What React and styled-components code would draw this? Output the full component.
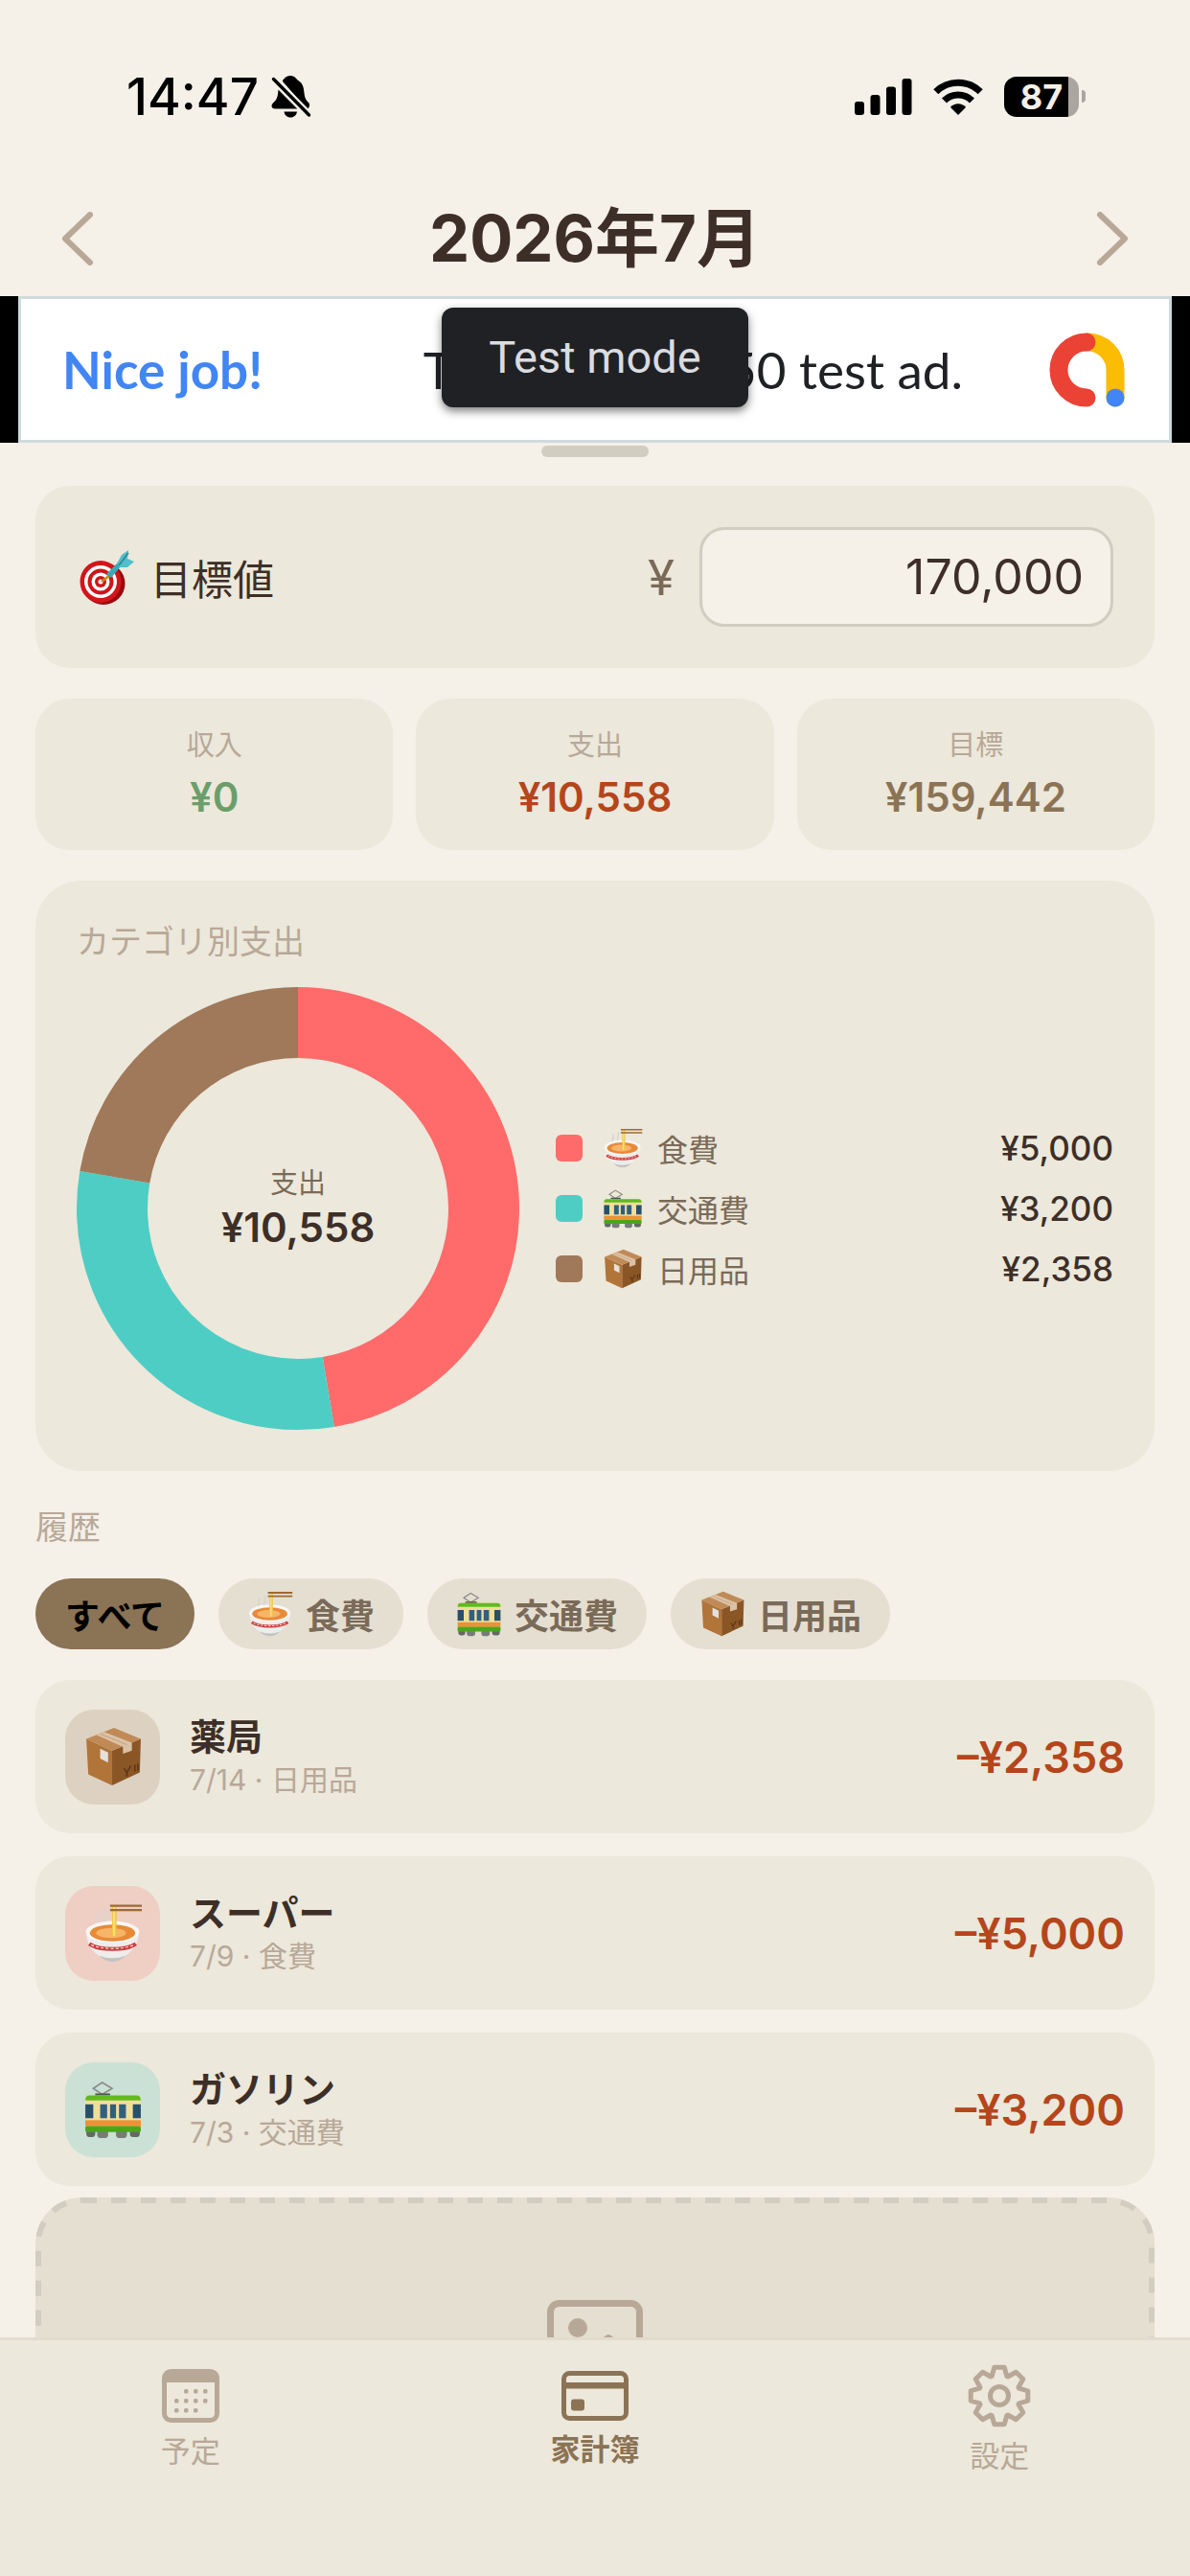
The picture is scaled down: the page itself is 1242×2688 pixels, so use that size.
import { useState } from "react";
import styled, { createGlobalStyle } from "styled-components";

const categories = {
  food: { name: "食費", color: "#ff6b6b", tint: "#efcec4", Icon: RamenIcon },
  transport: { name: "交通費", color: "#4ecdc4", tint: "#cbe1d5", Icon: TramIcon },
  daily: { name: "日用品", color: "#a0785a", tint: "#ddd1c1", Icon: BoxIcon },
};

const totals = [
  { category: "food", amount: 5000 },
  { category: "transport", amount: 3200 },
  { category: "daily", amount: 2358 },
];

const history = [
  { title: "薬局", date: "7/14", category: "daily", amount: 2358 },
  { title: "スーパー", date: "7/9", category: "food", amount: 5000 },
  { title: "ガソリン", date: "7/3", category: "transport", amount: 3200 },
];

const yen = (value) => "¥" + value.toLocaleString("en-US");

export default function App() {
  const [goal, setGoal] = useState("170,000");
  const [filter, setFilter] = useState("all");
  const spent = totals.reduce((sum, item) => sum + item.amount, 0);
  const rows = history.filter((item) => filter === "all" || item.category === filter);

  return (
    <>
      <GlobalStyle />
      <Screen>
        <StatusBar>
          <StatusGroup>
            <Clock>14:47</Clock>
            <BellOffIcon />
          </StatusGroup>
          <StatusGroup>
            <SignalIcon />
            <WifiIcon />
            <Battery>
              <BatteryBody>87</BatteryBody>
              <BatteryCap />
            </Battery>
          </StatusGroup>
        </StatusBar>

        <Header>
          <MonthButton aria-label="前の月">
            <svg width="34" height="56" viewBox="0 0 34 56">
              <path d="M30 3L4 28L30 53" />
            </svg>
          </MonthButton>
          <Month>2026年7月</Month>
          <MonthButton aria-label="次の月">
            <svg width="34" height="56" viewBox="0 0 34 56">
              <path d="M4 3L30 28L4 53" />
            </svg>
          </MonthButton>
        </Header>

        <AdBanner>
          <AdBody>
            <AdPraise>Nice job!</AdPraise>
            <AdText>This is a 320x50 test ad.</AdText>
            <AdLogo />
          </AdBody>
          <TestMode>Test mode</TestMode>
        </AdBanner>
        <Handle />

        <Main>
          <GoalCard>
            <GoalLabel htmlFor="goal">
              <DartIcon size={60} />
              目標値
            </GoalLabel>
            <Currency>¥</Currency>
            <GoalInput id="goal" value={goal} onChange={(e) => setGoal(e.target.value)} />
          </GoalCard>

          <Stats>
            <Stat>
              <StatLabel>収入</StatLabel>
              <StatValue color="#6b9e6b">¥0</StatValue>
            </Stat>
            <Stat>
              <StatLabel>支出</StatLabel>
              <StatValue color="#b5451b">{yen(spent)}</StatValue>
            </Stat>
            <Stat>
              <StatLabel>目標</StatLabel>
              <StatValue color="#8b7355">{yen(159442)}</StatValue>
            </Stat>
          </Stats>

          <ChartCard>
            <SectionTitle>カテゴリ別支出</SectionTitle>
            <ChartRow>
              <ChartBox>
                <Donut total={spent} />
                <ChartCenter>
                  <ChartLabel>支出</ChartLabel>
                  <StatValue color="#3d2f28">{yen(spent)}</StatValue>
                </ChartCenter>
              </ChartBox>
              <Legend>
                {totals.map((item) => {
                  const { name, color, Icon } = categories[item.category];
                  return (
                    <LegendRow key={item.category}>
                      <Swatch color={color} />
                      <Icon size={42} />
                      <LegendName>{name}</LegendName>
                      <LegendValue>{yen(item.amount)}</LegendValue>
                    </LegendRow>
                  );
                })}
              </Legend>
            </ChartRow>
          </ChartCard>

          <History>
            <SectionTitle>履歴</SectionTitle>
            <Chips>
              <Chip $active={filter === "all"} onClick={() => setFilter("all")}>
                すべて
              </Chip>
              {Object.entries(categories).map(([key, { name, Icon }]) => (
                <Chip key={key} $active={filter === key} onClick={() => setFilter(key)}>
                  <Icon size={48} />
                  {name}
                </Chip>
              ))}
            </Chips>
            <List>
              {rows.map((item) => {
                const { name, tint, Icon } = categories[item.category];
                return (
                  <Entry key={item.title}>
                    <EntryIcon color={tint}>
                      <Icon size={62} />
                    </EntryIcon>
                    <EntryText>
                      <EntryTitle>{item.title}</EntryTitle>
                      <EntryMeta>
                        {item.date} · {name}
                      </EntryMeta>
                    </EntryText>
                    <EntryAmount>–{yen(item.amount)}</EntryAmount>
                  </Entry>
                );
              })}
            </List>
          </History>

          <Upload aria-label="画像を追加">
            <DashedOutline>
              <rect x="3" y="3" rx="45" />
            </DashedOutline>
            <PhotoIcon />
          </Upload>
        </Main>

        <TabBar>
          <Tab href="#schedule">
            <CalendarIcon />
            予定
          </Tab>
          <Tab href="#budget" $active>
            <CardIcon />
            家計簿
          </Tab>
          <Tab href="#settings">
            <GearIcon />
            設定
          </Tab>
        </TabBar>
      </Screen>
    </>
  );
}

function Donut({ total }) {
  const radius = 194;
  const length = 2 * Math.PI * radius;
  let start = 0;
  return (
    <svg width="462" height="462" viewBox="0 0 462 462">
      <g transform="rotate(-90 231 231)" fill="none" strokeWidth="74">
        {totals.map((item) => {
          const part = (item.amount / total) * length;
          const offset = -start;
          start += part;
          return (
            <circle
              key={item.category}
              cx="231"
              cy="231"
              r={radius}
              stroke={categories[item.category].color}
              strokeDasharray={`${part} ${length - part}`}
              strokeDashoffset={offset}
            />
          );
        })}
      </g>
    </svg>
  );
}

function BellOffIcon() {
  return (
    <svg width="44" height="46" viewBox="0 0 44 46">
      <path d="M13 5.500C15 5 15.500 1 21 1C26.500 1 27 5 30 6.500C34.500 9.500 35 14 35.500 19C36 25 38 27 40 29C42 31 41 35.500 38 35.500L13 7Z" />
      <path d="M8.500 15.500C8 20 8 24 5 27.500C3 29.500 1.500 30.500 1.500 32.500C1.500 34.500 3 35.500 5 35.500H28.500Z" />
      <path d="M14.500 38.500H28C27.500 42 25 44.500 21.300 44.500C17.500 44.500 15 42 14.500 38.500Z" />
      <path d="M3.500 4.500L40.500 42" stroke="#f5f0e8" strokeWidth="8" />
      <path d="M3.500 4.500L40.500 42" stroke="#000" strokeWidth="3.400" strokeLinecap="round" />
    </svg>
  );
}

function SignalIcon() {
  return (
    <svg width="60" height="40" viewBox="0 0 60 40">
      <rect x="0" y="25" width="10" height="14" rx="3" />
      <rect x="16.500" y="18" width="10" height="21" rx="3" />
      <rect x="33" y="9.500" width="10" height="29.500" rx="3" />
      <rect x="49.500" y="1" width="10" height="38" rx="3" />
    </svg>
  );
}

function WifiIcon() {
  return (
    <svg width="52" height="40" viewBox="0 0 52 40">
      <g fill="none" stroke="#000" strokeWidth="7.200">
        <path d="M2.800 14.800A33 33 0 0 1 49.200 14.800" />
        <path d="M11.500 24A20.500 20.500 0 0 1 40.500 24" />
      </g>
      <path d="M18 31C22 26 30 26 34 31L26 39Z" />
    </svg>
  );
}

function AdLogo() {
  return (
    <svg width="80" height="80" viewBox="0 0 80 80">
      <g fill="none" strokeWidth="19" strokeLinecap="round">
        <path d="M40 11A29 29 0 0 1 69 40V69" stroke="#fbbc04" />
        <path d="M39 11A29 29 0 0 0 39 69" stroke="#ea4335" />
      </g>
      <circle cx="69" cy="69" r="9.500" fill="#4285f4" />
    </svg>
  );
}

function DartIcon({ size }) {
  return (
    <svg width={size} height={size} viewBox="0 0 60 60">
      <ellipse cx="28" cy="37" rx="22.500" ry="22" fill="#98090f" />
      <ellipse cx="25" cy="35" rx="21.500" ry="22" fill="#d3151b" />
      <circle cx="25" cy="35" r="17" fill="#fff" />
      <circle cx="25" cy="35" r="13.500" fill="#cf141a" />
      <circle cx="25" cy="35" r="9.500" fill="#fff" />
      <circle cx="25" cy="35" r="6" fill="#cf141a" />
      <circle cx="25" cy="35" r="2.500" fill="#fff" />
      <path d="M26 35L35 28" stroke="#c98a1a" strokeWidth="2.500" />
      <path d="M31 27L43 15L46 19L36 31Z" fill="#38a9b8" />
      <path d="M42 16L47 7L54 2L53 11L60 14L53 20L45 20Z" fill="#51bfcb" />
      <path d="M44 18L54 5" stroke="#2a8494" strokeWidth="1.500" />
    </svg>
  );
}

function RamenIcon({ size }) {
  return (
    <svg width={size} height={size} viewBox="0 0 60 60">
      <path d="M16 24C12 18 18 15 15 9M23 23C20 16 25 13 23 6" fill="none" stroke="#d9d6d0" strokeWidth="2.500" />
      <path d="M3 29C3 41 9 49 17 54Q29 61 41 54C49 49 56 41 56 29Z" fill="#eeedeb" />
      <path d="M16 53Q29 58 43 53Q37 59 29.500 59Q22 59 16 53Z" fill="#c4c3c2" />
      <ellipse cx="29.500" cy="29" rx="27" ry="11" fill="#f8f7f5" />
      <ellipse cx="29.500" cy="30" rx="23" ry="8.500" fill="#e88a38" />
      <ellipse cx="28" cy="30" rx="15" ry="5" fill="#f6b569" />
      <path d="M6 41C16 48 43 48 53 41" fill="none" stroke="#cf3a3c" strokeWidth="4" />
      <path d="M8 42C17 47 42 47 51 42" fill="none" stroke="#f3dcd8" strokeWidth="1.200" strokeDasharray="3 2" />
      <path d="M29 33V3H33.500V33Z" fill="#f2c744" />
      <path d="M31 33V3" stroke="#fae392" strokeWidth="1.500" />
      <path d="M27 2.500H59M27 7H59" stroke="#9b6a35" strokeWidth="2.200" />
    </svg>
  );
}

function TramIcon({ size }) {
  return (
    <svg width={size} height={size} viewBox="0 0 60 60">
      <path d="M10 9L19 3L29 9L19 15Z" fill="none" stroke="#8b8b8b" strokeWidth="1.600" />
      <rect x="12" y="14" width="15" height="3" fill="#4f5553" />
      <rect x="3" y="49" width="9" height="9" rx="3" fill="#646866" />
      <rect x="14" y="50" width="11" height="9" rx="3" fill="#777b79" />
      <rect x="33" y="50" width="11" height="9" rx="3" fill="#777b79" />
      <rect x="47" y="49" width="10" height="9" rx="3" fill="#646866" />
      <path d="M6 16H54Q58 16 58 21V52H2V21Q2 16 6 16Z" fill="#eedf9a" />
      <path d="M6 16H54Q58 16 58 21H2Q2 16 6 16Z" fill="#63ba1e" />
      <rect x="2" y="41" width="56" height="6" fill="#ed9137" />
      <rect x="2" y="47" width="56" height="6" rx="1.500" fill="#4ba51b" />
      <rect x="2" y="25" width="8" height="14" fill="#28506b" />
      <rect x="50" y="25" width="8" height="14" fill="#28506b" />
      <rect x="17" y="25" width="7" height="14" fill="#31607f" />
      <rect x="27" y="25" width="6" height="14" fill="#31607f" />
      <rect x="36" y="25" width="7" height="14" fill="#31607f" />
    </svg>
  );
}

function BoxIcon({ size }) {
  return (
    <svg width={size} height={size} viewBox="0 0 60 60">
      <path d="M3 12L29 24V59L5 48Z" fill="#b17439" />
      <path d="M29 24L58 12L57 46L29 59Z" fill="#8a5626" />
      <path d="M3 12L31 1L58 12L29 24Z" fill="#c08a57" />
      <path d="M13 8L21 5L49 16V24L40 27V20Z" fill="#dbc2a6" />
      <path d="M17 7L44 18" stroke="#c6a581" strokeWidth="1" />
      <path d="M17 22L25 26V36L17 32Z" fill="#e3e1dc" />
      <path d="M41 42L44 46L48 39M44 46V50M52 38V45M55 37V44" fill="none" stroke="#5b3616" strokeWidth="1.500" />
    </svg>
  );
}

function PhotoIcon() {
  return (
    <svg width="100" height="86" viewBox="0 0 100 86">
      <rect x="3.500" y="3.500" width="93" height="79" rx="9" fill="none" stroke="#b8a898" strokeWidth="7" />
      <circle cx="32" cy="29" r="10" fill="#b8a898" />
      <path d="M7 70L31 51L43 60L60 38Q64 34 68 38L93 62V78H7Z" fill="#b8a898" />
    </svg>
  );
}

function CalendarIcon() {
  const dots = [
    [25, 23], [35, 23], [45, 23],
    [15, 33], [25, 33], [35, 33], [45, 33],
    [15, 43], [25, 43], [35, 43],
  ];
  return (
    <svg width="60" height="56" viewBox="0 0 60 56" fill="currentColor">
      <rect x="2.500" y="2.500" width="55" height="51" rx="7" fill="none" stroke="currentColor" strokeWidth="5" />
      <path d="M2 14V8Q2 2 8 2H52Q58 2 58 8V14Z" />
      {dots.map(([x, y]) => (
        <rect key={`${x}-${y}`} x={x - 2} y={y - 2} width="4.500" height="4.500" rx="1.500" />
      ))}
    </svg>
  );
}

function CardIcon() {
  return (
    <svg width="70" height="52" viewBox="0 0 70 52" fill="currentColor">
      <rect x="2.500" y="2.500" width="65" height="47" rx="6" fill="none" stroke="currentColor" strokeWidth="5" />
      <rect x="3" y="12" width="64" height="6.500" />
      <rect x="10" y="29.500" width="14" height="12" rx="3" />
    </svg>
  );
}

function GearIcon() {
  const points = [];
  for (let i = 0; i < 8; i++) {
    const angle = (i * Math.PI) / 4;
    for (const [x, y] of [[-7.800, -20.500], [-5.200, -29.800], [5.200, -29.800], [7.800, -20.500]]) {
      const px = x * Math.cos(angle) - y * Math.sin(angle);
      const py = x * Math.sin(angle) + y * Math.cos(angle);
      points.push(`${33 + px},${33 + py}`);
    }
  }
  return (
    <svg width="66" height="66" viewBox="0 0 66 66" fill="none" stroke="currentColor" strokeWidth="5">
      <polygon points={points.join(" ")} strokeLinejoin="round" />
      <circle cx="33" cy="33" r="9.500" />
    </svg>
  );
}

const GlobalStyle = createGlobalStyle`
  * {
    box-sizing: border-box;
  }

  body {
    margin: 0;
    background: #f5f0e8;
    color: #3d2f28;
    font-family: Inter, "Noto Sans CJK JP", sans-serif;
  }

  button,
  input {
    font-family: inherit;
    border: none;
  }

  svg {
    display: block;
    flex-shrink: 0;
  }
`;

const Screen = styled.div`
  height: 100vh;
  display: flex;
  flex-direction: column;
`;

const StatusBar = styled.div`
  flex-shrink: 0;
  height: 189px;
  padding: 12px 109px 0 132px;
  display: flex;
  justify-content: space-between;
  align-items: center;
`;

const StatusGroup = styled.div`
  display: flex;
  align-items: center;
  gap: 22px;

  &:first-child {
    gap: 12px;
  }
`;

const Clock = styled.span`
  font-size: 53px;
  font-weight: 500;
  color: #000;
`;

const Battery = styled.div`
  display: flex;
  align-items: center;
  gap: 3px;
`;

const BatteryBody = styled.div`
  width: 78px;
  height: 42px;
  border-radius: 13px;
  background: linear-gradient(to right, #000 86%, #aaa69f 86%);
  color: #f5f0e8;
  font-size: 36px;
  font-weight: 700;
  line-height: 42px;
  text-align: center;
`;

const BatteryCap = styled.div`
  width: 4px;
  height: 13px;
  border-radius: 0 4px 4px 0;
  background: #aaa69f;
`;

const Header = styled.header`
  flex-shrink: 0;
  height: 120px;
  padding: 0 64px;
  display: flex;
  justify-content: space-between;
  align-items: center;
`;

const MonthButton = styled.button`
  padding: 0;
  background: none;

  path {
    fill: none;
    stroke: #b8a898;
    stroke-width: 6px;
    stroke-linecap: round;
    stroke-linejoin: round;
  }
`;

const Month = styled.h1`
  margin: 0;
  font-size: 67px;
  font-weight: 700;
  line-height: 80px;
`;

const AdBanner = styled.div`
  position: relative;
  flex-shrink: 0;
  height: 153px;
  padding: 0 19px;
  background: #000;
`;

const AdBody = styled.div`
  height: 100%;
  padding: 0 45px 0 43px;
  display: flex;
  align-items: center;
  background: #fff;
  border: 3px solid #cfdadd;
  color: #202124;
  font-family: Lato, sans-serif;
  font-size: 53px;
  white-space: nowrap;
`;

const AdPraise = styled.span`
  color: #4285f4;
  font-weight: 700;
`;

const AdText = styled.span`
  margin: 0 90px 0 auto;
`;

const TestMode = styled.div`
  position: absolute;
  top: 12px;
  left: 50%;
  transform: translateX(-50%);
  width: 320px;
  line-height: 104px;
  border-radius: 12px;
  background: #202124;
  box-shadow: 0 4px 10px rgba(0, 0, 0, 0.5);
  color: #dadce0;
  font-family: Roboto, sans-serif;
  font-size: 47px;
  text-align: center;
`;

const Handle = styled.div`
  flex-shrink: 0;
  align-self: center;
  width: 112px;
  height: 12px;
  margin: 3px 0 30px;
  border-radius: 6px;
  background: #d1cdc1;
`;

const Main = styled.main`
  flex: 1;
  min-height: 0;
  overflow: hidden;
  padding: 0 37px;
  display: flex;
  flex-direction: column;
  gap: 32px;

  > * {
    flex-shrink: 0;
  }
`;

const Card = styled.section`
  border-radius: 36px;
  background: #ece8db;
`;

const GoalCard = styled(Card)`
  padding: 43px;
  display: flex;
  align-items: center;
`;

const GoalLabel = styled.label`
  display: flex;
  align-items: center;
  gap: 17px;
  font-size: 43px;
`;

const Currency = styled.span`
  margin: 0 26px 0 auto;
  color: #7a6a58;
  font-size: 51px;
`;

const GoalInput = styled.input`
  width: 432px;
  height: 104px;
  padding: 0 28px;
  border: 3px solid #d1cdc1;
  border-radius: 26px;
  background: #f5f0e8;
  color: #3d2f28;
  font-size: 50px;
  text-align: right;
`;

const Stats = styled.div`
  display: grid;
  grid-template-columns: repeat(3, 1fr);
  gap: 24px;
`;

const Stat = styled(Card)`
  padding: 31px 12px;
  display: flex;
  flex-direction: column;
  align-items: center;
  gap: 12px;
`;

const StatLabel = styled.span`
  color: #b8a898;
  font-size: 29px;
  line-height: 36px;
`;

const StatValue = styled.strong`
  color: ${(props) => props.color};
  font-size: 42px;
  font-weight: 600;
  line-height: 48px;
`;

const ChartCard = styled(Card)`
  padding: 43px;
  border-radius: 48px;
`;

const SectionTitle = styled.h2`
  margin: 0;
  color: #b8a898;
  font-size: 34px;
  font-weight: 400;
  line-height: 42px;
`;

const ChartRow = styled.div`
  margin-top: 26px;
  display: flex;
  align-items: center;
  gap: 38px;
`;

const ChartBox = styled.div`
  position: relative;
`;

const ChartCenter = styled.div`
  position: absolute;
  inset: 0;
  display: flex;
  flex-direction: column;
  justify-content: center;
  align-items: center;
  gap: 4px;
`;

const ChartLabel = styled(StatLabel)`
  color: #7a6a58;
`;

const Legend = styled.div`
  flex: 1;
  display: flex;
  flex-direction: column;
  gap: 19px;
`;

const LegendRow = styled.div`
  height: 44px;
  display: flex;
  align-items: center;
  font-size: 32px;
`;

const Swatch = styled.span`
  width: 28px;
  height: 28px;
  margin-right: 21px;
  border-radius: 6px;
  background: ${(props) => props.color};
`;

const LegendName = styled.span`
  margin-left: 15px;
  color: #7a6a58;
`;

const LegendValue = styled.span`
  margin-left: auto;
  font-size: 35px;
  font-weight: 500;
`;

const History = styled.section`
  padding-top: 6px;
`;

const Chips = styled.div`
  margin: 32px 0;
  display: flex;
  gap: 25px;
`;

const Chip = styled.button`
  height: 74px;
  padding: 0 30px;
  display: flex;
  align-items: center;
  gap: 13px;
  border-radius: 37px;
  background: ${(props) => (props.$active ? "#8b7355" : "#e5dfd2")};
  color: ${(props) => (props.$active ? "#000" : "#7a6a58")};
  font-size: 36px;
  font-weight: 600;

  &:first-child {
    padding: 0 31px;
  }
`;

const List = styled.div`
  display: flex;
  flex-direction: column;
  gap: 24px;
`;

const Entry = styled(Card)`
  height: 160px;
  padding: 0 31px;
  display: flex;
  align-items: center;
  gap: 31px;
`;

const EntryIcon = styled.div`
  width: 99px;
  height: 99px;
  display: grid;
  place-items: center;
  border-radius: 30px;
  background: ${(props) => props.color};
`;

const EntryText = styled.div`
  flex: 1;
`;

const EntryTitle = styled.h3`
  margin: 0;
  font-size: 38px;
  font-weight: 600;
  line-height: 48px;
`;

const EntryMeta = styled.p`
  margin: 0;
  color: #b8a898;
  font-size: 30px;
  line-height: 42px;
`;

const EntryAmount = styled.strong`
  color: #b5451b;
  font-size: 45px;
  font-weight: 600;
`;

const Upload = styled.button`
  position: relative;
  height: 480px;
  margin-top: -20px;
  padding: 107px 0 0;
  display: flex;
  justify-content: center;
  align-items: flex-start;
  border-radius: 48px;
  background: #e5dfd2;
`;

const DashedOutline = styled.svg`
  position: absolute;
  inset: 0;
  width: 100%;
  height: 100%;

  rect {
    width: calc(100% - 6px);
    height: calc(100% - 6px);
    fill: none;
    stroke: #d1cdc1;
    stroke-width: 6px;
    stroke-dasharray: 16 15;
  }
`;

const TabBar = styled.nav`
  flex-shrink: 0;
  height: 249px;
  padding-top: 25px;
  display: grid;
  grid-template-columns: 32% 36% 32%;
  align-content: start;
  align-items: center;
  border-top: 3px solid #e2dccf;
  background: #ece8db;
`;

const Tab = styled.a`
  display: flex;
  flex-direction: column;
  align-items: center;
  gap: 6px;
  color: ${(props) => (props.$active ? "#8b7355" : "#b8a898")};
  font-size: 31px;
  font-weight: ${(props) => (props.$active ? 700 : 400)};
  line-height: 48px;
  text-decoration: none;
`;
